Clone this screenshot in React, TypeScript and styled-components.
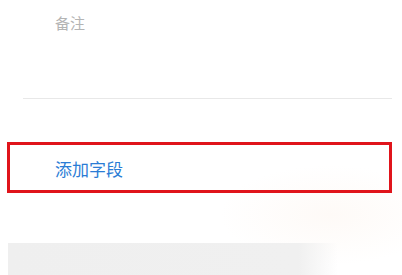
import styled, { createGlobalStyle } from "styled-components";

const GlobalStyle = createGlobalStyle`
  html, body {
    margin: 0;
    padding: 0;
    background: #ffffff;
  }
  body {
    font-family: "Noto Sans CJK SC", "Noto Sans", sans-serif;
  }
`;

const Page = styled.div`
  width: 402px;
  height: 275px;
  overflow: hidden;
  display: flex;
  flex-direction: column;
  background: radial-gradient(
    ellipse 110px 50px at 330px 215px,
    #fefaf7 0%,
    rgba(255, 255, 255, 0) 100%
  );
`;

const Field = styled.div`
  margin: 0 10px 0 23px;
  height: 99px;
  box-sizing: border-box;
  border-bottom: 1px solid #e8e8e8;
  padding: 10px 0 0 32px;
`;

const Label = styled.span`
  font-size: 15px;
  line-height: 20px;
  color: #b4b4b4;
`;

const AddBox = styled.div`
  margin: 43px 10px 0 7px;
  height: 51px;
  box-sizing: border-box;
  border: 3px solid #e0141b;
  display: flex;
  align-items: center;
  padding: 3px 0 0 45px;
`;

const AddText = styled.span`
  font-size: 17px;
  line-height: 22px;
  color: #2b7cd5;
`;

const Strip = styled.div`
  margin: 50px 0 0 8px;
  width: 330px;
  height: 32px;
  background: linear-gradient(
    to right,
    #efefef 0%,
    #f0f0f0 88%,
    rgba(245, 245, 245, 0) 100%
  );
`;

const App = () => {
  return (
    <>
      <GlobalStyle />
      <Page>
        <Field>
          <Label>备注</Label>
        </Field>
        <AddBox>
          <AddText>添加字段</AddText>
        </AddBox>
        <Strip />
      </Page>
    </>
  );
};

export default App;
